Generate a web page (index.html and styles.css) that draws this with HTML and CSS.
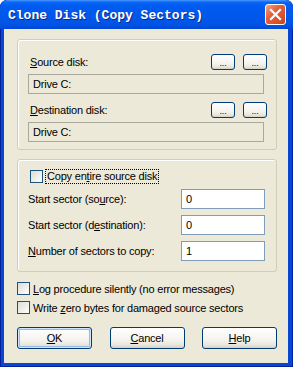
FILE: index.html
```html
<!DOCTYPE html>
<html lang="en">
<head>
  <meta charset="UTF-8" />
  <title>Clone Disk (Copy Sectors)</title>
  <link rel="stylesheet" href="styles.css">
</head>
<body>

<div class="window">
  <div class="titlebar">
    <span class="title">Clone Disk (Copy Sectors)</span>
    <span class="close-btn">
      <svg width="13" height="13" viewBox="0 0 13 13">
        <path d="M2 2 L11 11 M11 2 L2 11" stroke="#fff" stroke-width="2.2" stroke-linecap="square"/>
      </svg>
    </span>
  </div>

  <div class="client">
    <div class="group disks">
      <div class="label-row">
        <span class="label"><u>S</u>ource disk:</span>
        <span class="mini-btns">
          <button class="btn mini">...</button>
          <button class="btn mini">...</button>
        </span>
      </div>
      <div class="field readonly">Drive C:</div>

      <div class="label-row second">
        <span class="label"><u>D</u>estination disk:</span>
        <span class="mini-btns">
          <button class="btn mini">...</button>
          <button class="btn mini">...</button>
        </span>
      </div>
      <div class="field readonly">Drive C:</div>
    </div>

    <div class="group sectors">
      <div class="check inset">
        <span class="box"></span>
        <span class="focused">Copy en<u>t</u>ire source disk</span>
      </div>
      <div class="form-row">
        <span>Start sector (so<u>u</u>rce):</span>
        <div class="field edit">0</div>
      </div>
      <div class="form-row">
        <span>Start sector (d<u>e</u>stination):</span>
        <div class="field edit">0</div>
      </div>
      <div class="form-row">
        <span><u>N</u>umber of sectors to copy:</span>
        <div class="field edit">1</div>
      </div>
    </div>

    <div class="check option">
      <span class="box"></span>
      <span><u>L</u>og procedure silently (no error messages)</span>
    </div>
    <div class="check option">
      <span class="box"></span>
      <span>Write <u>z</u>ero bytes for damaged source sectors</span>
    </div>

    <div class="buttons">
      <button class="btn wide default"><u>O</u>K</button>
      <button class="btn wide"><u>C</u>ancel</button>
      <button class="btn wide"><u>H</u>elp</button>
    </div>
  </div>
</div>

</body>
</html>
```

FILE: styles.css
```css
body {
  margin: 0;
  background: #fff;
  font-family: "Liberation Sans", Arial, sans-serif;
  font-size: 11px;
  letter-spacing: -0.2px;
  color: #000;
}

.window {
  width: 293px;
  height: 367px;
  display: flex;
  flex-direction: column;
  background: #0847d4;
  border-radius: 7px 7px 0 0;
  box-shadow: inset 0 0 0 1px #00209c;
  overflow: hidden;
}

.titlebar {
  height: 29px;
  flex: none;
  display: flex;
  align-items: center;
  padding: 0 7px 0 8px;
  background: linear-gradient(#4c9bff 0, #0c68f6 2px, #005cf2 5px, #0057ea 16px, #0055e6 24px, #0048d2 29px);
  border-radius: 7px 7px 0 0;
}

.title {
  font: bold 13px "Liberation Mono", "Courier New", monospace;
  letter-spacing: 0;
  color: #fff;
  text-shadow: 1px 1px 0 #0b2a8c;
  padding-top: 1px;
}

.close-btn {
  margin-left: auto;
  width: 21px;
  height: 21px;
  box-sizing: border-box;
  border: 1px solid #fff;
  border-radius: 3px;
  background: linear-gradient(135deg, #f4a184, #e3603a 40%, #cc4420);
  display: flex;
  align-items: center;
  justify-content: center;
}

.client {
  flex: 1;
  margin: 0 5px 4px 4px;
  background: #ece9d8;
  padding: 10px 11px 0 13px;
  display: flex;
  flex-direction: column;
}

.group {
  border: 1px solid #d0cdb8;
  border-radius: 3px;
  box-shadow: inset 1px 1px 0 #fff;
  padding: 14px 11px 0 10px;
}

.disks {
  height: 111px;
  box-sizing: border-box;
}

.sectors {
  margin-top: 9px;
  height: 113px;
  box-sizing: border-box;
  padding-top: 10px;
}

.label-row {
  display: flex;
  align-items: center;
  justify-content: space-between;
  height: 16px;
  margin-bottom: 4px;
}

.label-row.second {
  margin-top: 8px;
}

.label {
  padding-left: 2px;
}

.mini-btns {
  display: flex;
  gap: 8px;
  margin-right: -2px;
}

.btn {
  font-family: "Liberation Sans", Arial, sans-serif;
  font-size: 11px;
  letter-spacing: -0.2px;
  color: #000;
  border: 1px solid #003c74;
  border-radius: 3px;
  background: linear-gradient(#ffffff, #f4f3ee 60%, #e8e6dd 85%, #d6d0c5);
  padding: 0;
  box-sizing: border-box;
}

.mini {
  width: 24px;
  height: 16px;
  line-height: 12px;
  font-size: 9px;
  padding-top: 2px;
}

.field {
  height: 20px;
  box-sizing: border-box;
  line-height: 18px;
  padding-left: 4px;
}

.readonly {
  border: 1px solid #a9a89f;
  background: #ece9d8;
  margin-right: 1px;
}

.edit {
  width: 84px;
  border: 1px solid #7f9db9;
  background: #fff;
}

.check {
  display: flex;
  align-items: center;
  height: 13px;
}

.box {
  width: 13px;
  height: 13px;
  box-sizing: border-box;
  border: 1px solid #1c5180;
  background: linear-gradient(135deg, #dcdcd7, #f4f4f0 70%, #fff);
  margin-right: 3px;
  flex: none;
}

.check.inset {
  padding-left: 2px;
  margin-bottom: 6px;
}

.focused {
  outline: 1px dotted #000;
  line-height: 13px;
  padding: 0 1px;
}

.form-row {
  display: flex;
  align-items: center;
  justify-content: space-between;
  margin-top: 6px;
}

.option {
  margin-top: 10px;
}

.option + .option {
  margin-top: 6px;
}

.buttons {
  display: flex;
  justify-content: space-between;
  margin-top: 13px;
}

.wide {
  width: 75px;
  height: 22px;
}

.default {
  box-shadow: inset 0 0 0 1px #cee7ff, inset 0 0 0 2px #98b8ea;
}
```
